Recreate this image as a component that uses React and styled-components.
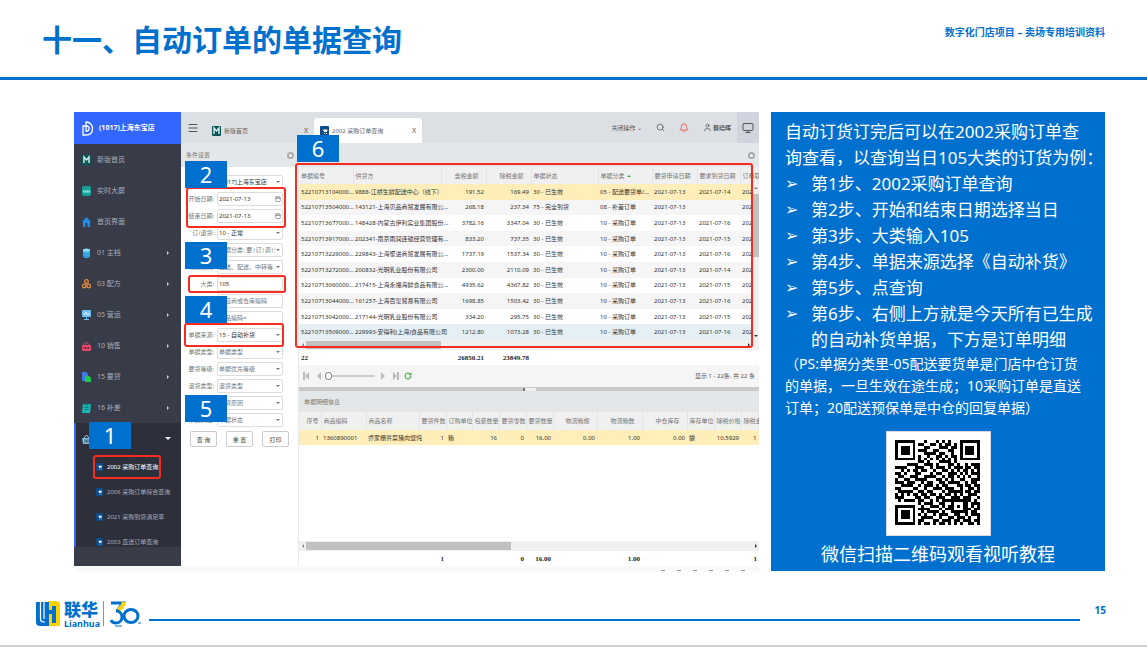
import React from "react";
import styled, { createGlobalStyle, css } from "styled-components";
import { Bell, Calendar, Menu, Monitor, RotateCw, Search, User } from "lucide-react";

const sans = `"Noto Sans", "Noto Sans CJK SC", sans-serif`;
const serif = `"Liberation Serif", "Noto Sans CJK SC", serif`;
const blue = "#0070ce";

const GlobalStyle = createGlobalStyle`
  * {
    box-sizing: border-box;
  }
  body {
    margin: 0;
    background: #fff;
    font-family: ${sans};
  }
  h1, h2, p, ul {
    margin: 0;
    padding: 0;
  }
  ul {
    list-style: none;
  }
`;

const Slide = styled.div`
  min-height: 100vh;
  display: flex;
  flex-direction: column;
  border-bottom: 2px solid #d0d0d0;
`;

const SlideHeader = styled.header`
  display: flex;
  justify-content: space-between;
  height: 80px;
  padding: 18px 42px 0;
  border-bottom: 3px solid ${blue};
  color: ${blue};
  h1 {
    font-size: 30px;
    line-height: 44px;
    font-weight: 700;
  }
  p {
    font-size: 10px;
    line-height: 28px;
    font-weight: 700;
    white-space: nowrap;
  }
`;

const SlideBody = styled.main`
  display: grid;
  grid-template-columns: minmax(0, 685fr) minmax(0, 334fr);
  gap: 12px;
  padding: 32px 42px 0 74px;
`;

const Frame = styled.section`
  position: relative;
  display: flex;
  flex-direction: column;
  overflow: hidden;
  font-size: 6px;
  line-height: 10px;
  color: #444;
  white-space: nowrap;
`;

const AppBody = styled.div`
  flex: 1;
  display: flex;
  min-height: 0;
`;

const Workspace = styled.div`
  flex: 1;
  min-width: 0;
  display: flex;
  flex-direction: column;
`;

const Columns = styled.div`
  flex: 1;
  display: flex;
  min-height: 0;
`;

const StatusStrip = styled.div`
  display: flex;
  justify-content: flex-end;
  align-items: flex-end;
  gap: 12px;
  height: 5px;
  padding-right: 14px;
  background: #f9f9f9;
  i {
    width: 4px;
    height: 1px;
    background: #999;
  }
`;

/* sidebar */

const Sidebar = styled.nav`
  flex: none;
  width: 107px;
  background: #383c49;
  color: #a9acb5;
  font-size: 7px;
`;

const Brand = styled.div`
  display: flex;
  align-items: center;
  gap: 5px;
  height: 32px;
  padding-left: 8px;
  background: #3366ff;
  color: #fff;
  font-weight: 700;
`;

const MenuItem = styled.a`
  display: flex;
  align-items: center;
  gap: 6px;
  height: 31px;
  padding: 0 12px 0 8px;
  color: inherit;
  text-decoration: none;
  svg {
    flex: none;
  }
`;

const Arrow = styled.span`
  margin-left: auto;
  border: 2px solid transparent;
  ${(props) =>
    props.$down
      ? css`
          margin-right: -2px;
          border-width: 3px 3px 0;
          border-top-color: #fff;
        `
      : css`
          border-width: 2px 0 2px 2px;
          border-left-color: #d5d6da;
        `}
`;

const OpenGroup = styled.div`
  height: 124px;
  overflow: hidden;
  background: #2d303b;
  border-left: 2px solid #3366ff;
  > ${MenuItem} {
    padding-left: 6px;
  }
`;

const SubItem = styled.a`
  display: flex;
  align-items: center;
  gap: 4px;
  height: 25px;
  padding-left: 20px;
  font-size: 6px;
  color: ${(props) => (props.$active ? "#fff" : "#a9acb5")};
  text-decoration: none;
`;

/* top bar and tabs */

const TopBar = styled.div`
  display: flex;
  align-items: center;
  height: 31px;
  padding-left: 6px;
  background: #dce0e4;
  color: #666;
`;

const IconButton = styled.button`
  display: flex;
  align-items: center;
  gap: 1px;
  padding: 0;
  border: 0;
  background: none;
  color: ${(props) => props.$color || "#555"};
  font: inherit;
`;

const Tab = styled.div`
  display: flex;
  align-items: center;
  align-self: flex-end;
  gap: 3px;
  height: 25px;
  width: ${(props) => props.$width};
  padding: 0 6px 0 ${(props) => (props.$active ? "6px" : "13px")};
  border-radius: 4px 4px 0 0;
  background: ${(props) => (props.$active ? "#fff" : "transparent")};
  button {
    margin-left: auto;
    font-size: 7px;
  }
`;

const TopActions = styled.div`
  display: flex;
  align-items: center;
  gap: 14px;
  height: 100%;
  margin-left: auto;
`;

const ScreenButton = styled(IconButton)`
  justify-content: center;
  width: 22px;
  height: 100%;
  margin-left: -8px;
  background: #cfd4de;
`;

const SectionBar = styled.div`
  display: flex;
  align-items: center;
  justify-content: space-between;
  height: ${(props) => props.$height};
  padding: 0 4px 0 5px;
  background: #e3e7ea;
  color: #777;
`;

const Dot = styled.span`
  width: 7px;
  height: 7px;
  border: 2px solid #aaa;
  border-radius: 50%;
  background: #fff;
`;

/* filter form */

const FilterColumn = styled.div`
  flex: none;
  width: 118px;
  border-right: 1px solid #e8e8e8;
`;

const FilterForm = styled.form`
  display: flex;
  flex-direction: column;
  padding: 6px 15px 0 4px;
`;

const FieldRow = styled.div`
  display: flex;
  align-items: center;
  gap: 3px;
  height: 17px;
  label {
    width: 29px;
    text-align: right;
    color: #777;
  }
`;

const Control = styled.div`
  position: relative;
  flex: 1;
  min-width: 0;
  height: 14px;
  input,
  select {
    display: block;
    width: 100%;
    height: 100%;
    padding: 0 1px;
    border: 1px solid #ddd;
    border-radius: 2px;
    background: #fff;
    color: ${(props) => (props.$filled ? "#333" : "#777")};
    font-family: inherit;
    font-size: 6px;
    appearance: none;
    outline: none;
  }
  select {
    padding-right: 7px;
  }
  input::placeholder {
    color: #777;
  }
  svg {
    position: absolute;
    right: 2px;
    top: 4px;
    color: #888;
  }
`;

const Caret = styled.span`
  position: absolute;
  right: 3px;
  top: 6px;
  border: 2px solid transparent;
  border-top-color: #777;
  border-bottom: 0;
`;

const FormActions = styled.div`
  display: flex;
  gap: 9px;
  padding: 3px 0 0 5px;
  button {
    flex: none;
    width: 27px;
    height: 16px;
    padding: 0;
    border: 1px solid #ccc;
    border-radius: 2px;
    background: #fff;
    color: #444;
    font-family: inherit;
    font-size: 6px;
  }
`;

/* grids */

const Main = styled.div`
  flex: 1;
  min-width: 0;
  display: flex;
  flex-direction: column;
  overflow: hidden;
`;

const GridBox = styled.div`
  position: relative;
  overflow: hidden;
`;

const Grid = styled.table`
  table-layout: fixed;
  width: 100%;
  height: ${(props) => props.$height};
  border-collapse: collapse;
  color: #333;
  th {
    height: ${(props) => props.$head};
    background: #f0f0f0;
    border-right: 1px solid #e4e4e4;
    color: #777;
    font-weight: 400;
  }
  th,
  td {
    padding: 0 2px;
  }
  tbody tr:nth-child(even) {
    background: #f5f5f5;
  }
  tbody tr:first-child {
    background: #ffeeb9;
  }
  tbody tr:nth-child(10) {
    background: #e5f0f4;
  }
`;

const Cell = styled.td`
  text-align: ${(props) => props.$align || "left"};
`;

const HeadCell = styled.th`
  && {
    padding-right: ${(props) => (props.$wide ? "7px" : "2px")};
  }
  text-align: ${(props) => props.$align || "left"};
`;

const TotalsTable = styled(Grid)`
  font-family: ${serif};
  font-size: 7px;
  font-weight: 700;
  color: #222;
  tbody tr:first-child {
    background: #fff;
  }
`;

const SortMark = styled.span`
  display: inline-block;
  margin-left: 2px;
  vertical-align: middle;
  border: 2px solid transparent;
  border-bottom-color: #2eab3a;
  border-top: 0;
`;

const ScrollY = styled.div`
  position: absolute;
  top: 17px;
  right: 0;
  bottom: 0;
  width: 7px;
  display: flex;
  flex-direction: column;
  align-items: center;
  padding: 3px 0;
  background: #f0f0f0;
  &::before,
  &::after {
    content: "";
    border: 2px solid transparent;
  }
  &::before {
    border-top: 0;
    border-bottom-color: #888;
  }
  &::after {
    margin-top: auto;
    border-bottom: 0;
    border-top-color: #333;
  }
  i {
    width: 6px;
    height: 63px;
    margin-top: 5px;
    background: #c1c1c1;
  }
`;

const ScrollX = styled.div`
  display: flex;
  align-items: center;
  justify-content: space-between;
  height: 10px;
  padding: 0 ${(props) => props.$end} 0 3px;
  background: #f0f0f0;
  &::before,
  &::after {
    content: "";
    border: 2px solid transparent;
  }
  &::before {
    border-left: 0;
    border-right-color: #888;
  }
  &::after {
    border-right: 0;
    border-left-color: #333;
  }
  i {
    width: ${(props) => props.$thumb};
    height: 8px;
    margin: 0 auto 0 2px;
    background: #c1c1c1;
  }
`;

const Pager = styled.div`
  display: flex;
  align-items: center;
  justify-content: space-between;
  height: 22px;
  padding: 0 4px 0 4px;
  background: #f5f5f5;
  color: #555;
`;

const PagerNav = styled.div`
  display: flex;
  align-items: center;
  gap: 5px;
`;

const PageSlider = styled.input`
  appearance: none;
  width: 50px;
  height: 8px;
  margin: 0 0 0 -2px;
  background: linear-gradient(#ccc, #ccc) center / 100% 2px no-repeat;
  &::-webkit-slider-thumb {
    appearance: none;
    width: 7px;
    height: 8px;
    border: 1px solid #888;
    border-radius: 50%;
    background: #fff;
  }
`;

const Splitter = styled.div`
  display: flex;
  align-items: center;
  justify-content: center;
  height: 4px;
  background: #c9c9c9;
  i {
    width: 13px;
    height: 3px;
    border-left: 2px solid #777;
    background: #eee;
  }
`;

const EmptyRows = styled.div`
  flex: 1;
  min-height: 96px;
`;

/* call-outs over the program window */

const Outline = styled.div`
  position: absolute;
  left: ${(props) => props.$x}px;
  top: ${(props) => props.$y}px;
  width: ${(props) => props.$w}px;
  height: ${(props) => props.$h}px;
  border: 2px solid #f82b20;
  border-radius: 3px;
  pointer-events: none;
`;

const GridOutline = styled(Outline)`
  right: 6px;
  width: auto;
`;

const Badge = styled.span`
  position: absolute;
  left: ${(props) => props.$x}px;
  top: ${(props) => props.$y}px;
  width: 42px;
  height: 27px;
  background: ${blue};
  color: #fff;
  font-size: 22px;
  line-height: 27px;
  text-align: center;
`;

/* guide panel */

const Guide = styled.aside`
  display: flex;
  flex-direction: column;
  padding: 7px 4px 0 14px;
  background: ${blue};
  color: #fff;
  font-size: 17px;
  line-height: 26px;
  white-space: nowrap;
`;

const Step = styled.li`
  display: flex;
  &::before {
    content: "➢";
    flex: none;
    width: 26px;
    font-family: "DejaVu Sans", sans-serif;
    font-size: 16px;
  }
`;

const Note = styled.p`
  font-size: 14px;
  line-height: 22px;
`;

const QrFigure = styled.figure`
  display: flex;
  flex-direction: column;
  align-items: center;
  gap: 5px;
  margin: 12px 10px 0 0;
  font-size: 18px;
  svg {
    background: #fff;
    border: 1px solid #d8d8e4;
  }
`;

/* footer */

const SlideFooter = styled.footer`
  display: flex;
  align-items: flex-start;
  height: 48px;
  margin-top: auto;
  padding: 4px 41px 0 36px;
  color: ${blue};
`;

const LogoName = styled.div`
  display: flex;
  flex-direction: column;
  margin: 0 3px 0 4px;
  font-weight: 700;
  strong {
    font-size: 17px;
    line-height: 18px;
  }
  span {
    font-size: 9px;
    line-height: 9px;
  }
`;

const FooterRule = styled.div`
  flex: 1;
  height: 2px;
  margin: 18px 15px 0 8px;
  background: ${blue};
`;

const PageNumber = styled.span`
  font-size: 10px;
  line-height: 18px;
  font-weight: 700;
`;

const menu = [
  ["m", "新版首页"],
  ["data", "实时大屏"],
  ["home", "首页界面"],
  ["db", "01 主档", true],
  ["rings", "03 配方", true],
  ["screen", "05 营运", true],
  ["sale", "10 销售", true],
  ["doc", "15 要货", true],
  ["clip", "16 补差", true],
];

const submenu = [
  "2002 采购订单查询",
  "2006 采购订单综合查询",
  "2021 采购到货满足率",
  "2003 直送订单查询",
];

const fields = [
  { id: "store", label: "门店:", value: "[1017]上海东宝店", type: "select", filled: true },
  { id: "from", label: "开始日期:", value: "2021-07-13", type: "date", filled: true },
  { id: "to", label: "结束日期:", value: "2021-07-13", type: "date", filled: true },
  { id: "kind", label: "订/退货:", value: "10 - 正常", type: "select", filled: true },
  { id: "group", label: "单据分类:", value: "单据分类: 要|订|调|预", type: "select" },
  { id: "delivery", label: "物流模式:", value: "直送、配送、中转等", type: "select" },
  { id: "category", label: "大类:", value: "105", type: "text", filled: true },
  { id: "supplier", label: "供货方:", hint: "供应商或仓库编码", type: "text" },
  { id: "goods", label: "商品:", hint: "商品编码=", type: "text" },
  { id: "source", label: "单据来源:", value: "15 - 自动补货", type: "select", filled: true },
  { id: "billtype", label: "单据类型:", value: "单据类型", type: "select" },
  { id: "level", label: "要货等级:", value: "单据优先等级", type: "select" },
  { id: "returntype", label: "退货类型:", value: "退货类型", type: "select" },
  { id: "reason", label: "退货原因:", value: "退货原因", type: "select" },
  { id: "state", label: "单据状态:", value: "单据状态", type: "select" },
];

const orderCols = [
  { w: 54, t: "单据编号" },
  { w: 88, t: "供货方" },
  { w: 45, t: "含税金额", a: "right" },
  { w: 45, t: "除税金额", a: "right" },
  { w: 67, t: "单据状态" },
  { w: 54, t: "单据分类", sort: true },
  { w: 45, t: "要货申请日期" },
  { w: 43, t: "要求到货日期" },
  { t: "订单取" },
];

const done = "30 - 已生效";
const buy = "10 - 采购订单";
const orders = [
  ["52210713104000...", "9888-江桥生鲜配送中心（线下）", "191.52", "169.49", done, "05 - 配送要货单/...", "14"],
  ["52210713504000...", "143121-上海贝品商贸发展有限公...", "268.18", "237.34", "75 - 完全到货", "08 - 补差订单", ""],
  ["52210713677000...", "148428-内蒙古伊利实业集团股份...", "3782.16", "3347.04", done, buy, "16"],
  ["52210713917000...", "202341-南京雨润连锁经营管理有...", "833.20", "737.35", done, buy, "15"],
  ["52210713229000...", "229843-上海聚进商贸发展有限公...", "1737.19", "1537.34", done, buy, "16"],
  ["52210713272000...", "200832-光明乳业股份有限公司", "2300.00", "2110.09", done, buy, "14"],
  ["52210713060000...", "217415-上海永福海鲜食品有限公...", "4935.62", "4367.82", done, buy, "15"],
  ["52210713044000...", "161257-上海百玺贸易有限公司", "1698.85", "1503.42", done, buy, "16"],
  ["52210713042000...", "217144-光明乳业股份有限公司", "334.20", "295.75", done, buy, "15"],
  ["52210713509000...", "229993-安得利(上海)食品有限公司", "1212.80", "1073.28", done, buy, "16"],
].map((r) => [...r.slice(0, 6), "2021-07-13", r[6] && `2021-07-${r[6]}`, "202"]);

const detailCols = [
  { w: 22, t: "序号", a: "right" },
  { w: 45, t: "商品编码" },
  { w: 53, t: "商品名称" },
  { w: 27, t: "要货件数", a: "right" },
  { w: 26, t: "订购单位" },
  { w: 27, t: "包装数量", a: "right" },
  { w: 27, t: "要货零数", a: "right" },
  { w: 27, t: "要货数量", a: "right" },
  { w: 44, t: "物流箱规", a: "right" },
  { w: 45, t: "物流箱数", a: "right" },
  { w: 45, t: "中仓库存", a: "right" },
  { w: 27, t: "库存单位" },
  { w: 27, t: "除税价格", a: "right" },
  { t: "除税金", a: "right" },
];

const details = [
  ["1", "1360890001", "乔家栅荠菜猪肉馄饨", "1", "箱", "16", "0", "16.00", "0.00", "1.00", "0.00", "袋", "10.5929", "1"],
];

const orderTotals = ["22", "", "26850.21", "23849.78", "", "", "", "", ""];
const detailTotals = ["", "", "", "1", "", "", "0", "16.00", "", "1.00", "", "", "", "1"];

const qrRows = [
  "11111110001000101010001111111",
  "10000010110011010110101000001",
  "10111010001100011101101011101",
  "10111010111001100011001011101",
  "10111010001111011001001011101",
  "10000010100100110101101000001",
  "11111110101010101010101111111",
  "00000000110100011110100000000",
  "00001111001110100011010010111",
  "11110001110010111010111011011",
  "00101011011001001101010110101",
  "11010001100010110011101010111",
  "01100111001111001011010101001",
  "10011001111000110101001100111",
  "11101110010110011011110010110",
  "00111100101110101100011011011",
  "11000011001001110111001001101",
  "01111100110110001011111011011",
  "10101011011011010110101001110",
  "11100001101100111001110111001",
  "01011110110010101111111111010",
  "00000000101110011001000110111",
  "11111110010011101011010110101",
  "10000010111100010111000111011",
  "10111010010111101001111110110",
  "10111010101001011100110010111",
  "10111010011110010011011101001",
  "10000010110001101110110111011",
  "11111110101101011010101001101",
];

const QrCode = () => (
  <svg width="105" height="105" viewBox="-8 -8 105 105" role="img" aria-label="二维码" shapeRendering="crispEdges">
    {qrRows.map((row, y) =>
      [...row].map((bit, x) => bit === "1" && <rect key={`${x}-${y}`} x={x * 3} y={y * 3} width="3" height="3" />)
    )}
  </svg>
);

const glyphs = {
  m: (
    <>
      <rect width="9" height="10" rx="1" fill="#0b5558" />
      <path d="M2 8V2l2.5 3L7 2v6" stroke="#d8f3ee" strokeWidth="1.4" fill="none" />
    </>
  ),
  data: (
    <>
      <rect width="9" height="10" rx="2" fill="#14a098" />
      <path d="M1 5h7M1 6h7" stroke="#d8f3ee" strokeWidth="1" strokeDasharray="1.5 .5" />
    </>
  ),
  home: <path d="M4.5 0 0 5h1v5h2.500V6h2v4H8V5h1z" fill="#1d8fea" />,
  db: (
    <>
      <path d="M1 2v6c0 2.500 7 2.500 7 0V2z" fill="#39b2f0" />
      <ellipse cx="4.500" cy="2" rx="3.500" ry="1.500" fill="#8fdbff" />
      <path d="M1 4.500c0 2 7 2 7 0M1 7c0 2 7 2 7 0" stroke="#1c7fc0" strokeWidth=".6" fill="none" />
    </>
  ),
  rings: (
    <g fill="none" stroke="#ef8d3c" strokeWidth="1.3">
      <circle cx="4.500" cy="2.500" r="1.800" />
      <circle cx="2.300" cy="7" r="1.800" />
      <circle cx="6.700" cy="7" r="1.800" />
    </g>
  ),
  screen: (
    <>
      <rect width="9" height="7" rx="1" fill="#6fc0fa" />
      <path d="M1 4h2l1-2 1 3 1-1h2" stroke="#fff" strokeWidth=".7" fill="none" />
      <path d="M4 7h1v2h2v1H2V9h2z" fill="#6fc0fa" />
    </>
  ),
  sale: (
    <>
      <path d="M1.500 4 4.500 1l3 3" stroke="#e85a78" strokeWidth=".8" fill="none" />
      <rect y="4" width="9" height="6" rx="1" fill="#e64768" />
      <path d="M1.500 7h6" stroke="#55202d" strokeWidth="1.500" strokeDasharray="1 .5" />
    </>
  ),
  doc: (
    <>
      <path d="M0 0h4l2 2v7H0z" fill="#3b7ae8" />
      <path d="M3 4h4l2 2v4H3z" fill="#1fc94c" />
    </>
  ),
  clip: (
    <>
      <path d="M1 1h8L8 10H0z" fill="#17b9b5" />
      <path d="M3 0h3v2H3zM2.500 4.500h4M2.500 6.500h4" stroke="#0b5f68" strokeWidth=".8" fill="none" />
    </>
  ),
  basket: (
    <>
      <path d="M2 4l2.500-3L7 4" stroke="#9ccbe8" strokeWidth="1" fill="none" />
      <path d="M0 4h9L8 10H1z" fill="#7db9de" />
      <path d="M3 5.500v3M4.500 5.500v3M6 5.500v3" stroke="#2d303b" strokeWidth=".7" />
    </>
  ),
  cart: (
    <>
      <rect width="9" height="10" rx="1" fill="#0e4a86" />
      <path d="M2 3h1l1 3h3l.5-2.500H3.500z" fill="#fff" />
      <circle cx="4.500" cy="7.500" r=".6" fill="#fff" />
      <circle cx="6.500" cy="7.500" r=".6" fill="#fff" />
    </>
  ),
};

const Glyph = ({ name, size = 10 }) => (
  <svg width={size - 1} height={size} viewBox="0 0 9 10">
    {glyphs[name]}
  </svg>
);

const Pointer = ({ flip, bar, label }) => (
  <IconButton type="button" aria-label={label}>
    <svg width="7" height="8" viewBox="0 0 7 8" fill="#bbb">
      <g transform={flip ? "matrix(-1 0 0 1 7 0)" : undefined}>
        <path d="M6 0v8L2 4z" />
        {bar && <path d="M0 0h2v8H0z" />}
      </g>
    </svg>
  </IconButton>
);

const Cols = ({ cols }) => (
  <colgroup>
    {cols.map((c) => (
      <col key={c.t} style={{ width: c.w }} />
    ))}
  </colgroup>
);

const DataGrid = ({ cols, rows, height, head }) => (
  <Grid $height={height} $head={head}>
    <Cols cols={cols} />
    <thead>
      <tr>
        {cols.map((c) => (
          <HeadCell key={c.t} $align={c.a} $wide={c.a && c.w > 40}>
            {c.t}
            {c.sort && <SortMark />}
          </HeadCell>
        ))}
      </tr>
    </thead>
    <tbody>
      {rows.map((row) => (
        <tr key={row[0]}>
          {row.map((value, i) => (
            <Cell key={i} $align={cols[i].a}>
              {value}
            </Cell>
          ))}
        </tr>
      ))}
    </tbody>
  </Grid>
);

const Totals = ({ cols, values }) => (
  <TotalsTable $height="15px">
    <Cols cols={cols} />
    <tbody>
      <tr>
        {values.map((value, i) => (
          <Cell key={i} $align={cols[i].a}>
            {value}
          </Cell>
        ))}
      </tr>
    </tbody>
  </TotalsTable>
);

const Field = ({ id, label, value, hint, type, filled }) => (
  <FieldRow>
    <label htmlFor={id}>{label}</label>
    <Control $filled={filled}>
      {type === "select" ? (
        <>
          <select id={id}>
            <option>{value}</option>
          </select>
          <Caret />
        </>
      ) : (
        <input id={id} type="text" defaultValue={value} placeholder={hint} />
      )}
      {type === "date" && <Calendar size={6} strokeWidth={3} />}
    </Control>
  </FieldRow>
);

const SideMenu = () => (
  <Sidebar>
    <Brand>
      <svg width="12" height="15" viewBox="0 0 12 15" fill="none" stroke="#fff" strokeWidth="1.300">
        <path d="M1 5v9h3c5 0 6.500-3 6.500-6.500S8 1 4 1v9h1c2.500 0 3-5 0-5z" />
      </svg>
      (1017)上海东宝店
    </Brand>
    {menu.map(([icon, text, nested]) => (
      <MenuItem key={text} href="#">
        <Glyph name={icon} />
        {text}
        {nested && <Arrow />}
      </MenuItem>
    ))}
    <OpenGroup>
      <MenuItem href="#" aria-label="展开">
        <Glyph name="basket" />
        <Arrow $down />
      </MenuItem>
      {submenu.map((text, i) => (
        <SubItem key={text} href="#" $active={i === 0}>
          <Glyph name="cart" size={8} />
          {text}
        </SubItem>
      ))}
    </OpenGroup>
  </Sidebar>
);

const Tabs = () => (
  <TopBar>
    <IconButton type="button" aria-label="菜单">
      <Menu size={12} strokeWidth={2} />
    </IconButton>
    <Tab $width="115px">
      <Glyph name="m" />
      新版首页
      <IconButton type="button">X</IconButton>
    </Tab>
    <Tab $active $width="108px">
      <Glyph name="cart" />
      2002 采购订单查询
      <IconButton type="button">X</IconButton>
    </Tab>
    <TopActions>
      <IconButton type="button">关闭操作 ⌄</IconButton>
      <IconButton type="button" aria-label="搜索">
        <Search size={9} />
      </IconButton>
      <IconButton type="button" aria-label="消息" $color="#f5483b">
        <Bell size={10} />
      </IconButton>
      <IconButton type="button">
        <User size={9} />
        <b>蔡晓晖</b>
      </IconButton>
      <ScreenButton type="button" aria-label="屏幕">
        <Monitor size={12} />
      </ScreenButton>
    </TopActions>
  </TopBar>
);

const ProgramWindow = () => (
  <Frame>
    <AppBody>
      <SideMenu />
      <Workspace>
        <Tabs />
        <Columns>
          <FilterColumn>
            <SectionBar $height="24px">
              条件设置
              <Dot />
            </SectionBar>
            <FilterForm>
              {fields.map((field) => (
                <Field key={field.id} {...field} />
              ))}
              <FormActions>
                <button type="button">查 询</button>
                <button type="button">重 置</button>
                <button type="button">打印</button>
              </FormActions>
            </FilterForm>
          </FilterColumn>
          <Main>
            <SectionBar $height="24px">
              <span />
              <Dot />
            </SectionBar>
            <GridBox>
              <DataGrid cols={orderCols} rows={orders} height="173px" head="17px" />
              <ScrollY>
                <i />
              </ScrollY>
            </GridBox>
            <ScrollX $thumb="135px" $end="9px">
              <i />
            </ScrollX>
            <Totals cols={orderCols} values={orderTotals} />
            <Pager>
              <PagerNav>
                <Pointer bar label="第一页" />
                <Pointer label="上一页" />
                <PageSlider type="range" defaultValue="0" aria-label="页码" />
                <Pointer flip label="下一页" />
                <Pointer flip bar label="最后一页" />
                <IconButton type="button" aria-label="刷新" $color="#2eab3a">
                  <RotateCw size={8} strokeWidth={3} />
                </IconButton>
              </PagerNav>
              显示 1 - 22条, 共 22 条
            </Pager>
            <Splitter>
              <i />
            </Splitter>
            <SectionBar $height="21px">单据明细信息</SectionBar>
            <GridBox>
              <DataGrid cols={detailCols} rows={details} height="33px" head="18px" />
            </GridBox>
            <EmptyRows />
            <ScrollX $thumb="205px" $end="2px">
              <i />
            </ScrollX>
            <Totals cols={detailCols} values={detailTotals} />
          </Main>
        </Columns>
      </Workspace>
    </AppBody>
    <StatusStrip>
      <i />
      <i />
      <i />
      <i />
      <i />
      <i />
    </StatusStrip>
    <Outline $x={112} $y={75} $w={100} $h={41} />
    <Outline $x={114} $y={163} $w={98} $h={18} />
    <Outline $x={110} $y={211} $w={100} $h={24} />
    <Outline $x={19} $y={343} $w={68} $h={24} />
    <GridOutline $x={221} $y={51} $h={185} />
    <Badge $x={15} $y={310}>1</Badge>
    <Badge $x={111} $y={49}>2</Badge>
    <Badge $x={111} $y={130}>3</Badge>
    <Badge $x={111} $y={184}>4</Badge>
    <Badge $x={111} $y={283}>5</Badge>
    <Badge $x={223} $y={23}>6</Badge>
  </Frame>
);

const steps = [
  "第1步、2002采购订单查询",
  "第2步、开始和结束日期选择当日",
  "第3步、大类输入105",
  "第4步、单据来源选择《自动补货》",
  "第5步、点查询",
];

const App = () => (
  <>
    <GlobalStyle />
    <Slide>
      <SlideHeader>
        <h1>十一、自动订单的单据查询</h1>
        <p>数字化门店项目 – 卖场专用培训资料</p>
      </SlideHeader>
      <SlideBody>
        <ProgramWindow />
        <Guide>
          <p>
            自动订货订完后可以在2002采购订单查
            <br />
            询查看，以查询当日105大类的订货为例：
          </p>
          <ul>
            {steps.map((text) => (
              <Step key={text}>{text}</Step>
            ))}
            <Step>
              <span>
                第6步、右侧上方就是今天所有已生成
                <br />
                的自动补货单据，下方是订单明细
              </span>
            </Step>
          </ul>
          <Note>
            （PS:单据分类里-05配送要货单是门店中仓订货
            <br />
            的单据，一旦生效在途生成；10采购订单是直送
            <br />
            订单；20配送预保单是中仓的回复单据）
          </Note>
          <QrFigure>
            <QrCode />
            <figcaption>微信扫描二维码观看视听教程</figcaption>
          </QrFigure>
        </Guide>
      </SlideBody>
      <SlideFooter>
        <svg width="24" height="25" viewBox="0 0 24 25" fill="none">
          <path d="M0 1h12v24H4q-4 0-4-4z" fill={blue} />
          <path d="M12 0h8q4 0 4 4v21H12z" fill="#ffd200" />
          <path d="M4.500 1v17q0 3 3 3H10M8 1v17" stroke="#fff" strokeWidth="1.200" />
          <path d="M9 1h4v8h3V5h4v17h-4v-9h-3v12H9z" fill={blue} />
        </svg>
        <LogoName>
          <strong>联华</strong>
          <span>Lianhua</span>
        </LogoName>
        <svg width="38" height="26" viewBox="0 0 38 26" fill="none">
          <path d="M.5 0v25" stroke="#5f9fd4" />
          <path d="M8 2h12l-6 8" stroke={blue} strokeWidth="3" />
          <path d="M21 1q-1 5-6 8" stroke="#ffd200" strokeWidth="4" />
          <path d="M13 10c8 0 8 12 0 12q-4 0-5-3" stroke={blue} strokeWidth="3" />
          <ellipse cx="28" cy="15" rx="7" ry="6.500" stroke={blue} strokeWidth="3" />
          <path d="M17 20q3-2 4-6" stroke={blue} strokeWidth="2" />
          <path d="M35 22h3M12 25h7" stroke={blue} strokeWidth="1" />
        </svg>
        <FooterRule />
        <PageNumber>15</PageNumber>
      </SlideFooter>
    </Slide>
  </>
);

export default App;
